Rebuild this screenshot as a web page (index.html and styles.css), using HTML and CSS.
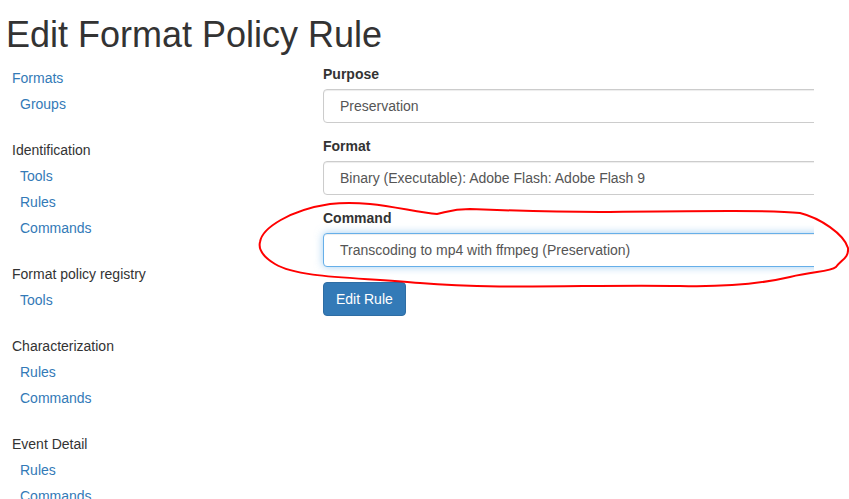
FILE: index.html
```html
<!DOCTYPE html>
<html lang="en">
<head>
<meta charset="utf-8">
<title>Edit Format Policy Rule</title>
<link rel="stylesheet" href="styles.css">
</head>
<body>
<h1 class="page-title">Edit Format Policy Rule</h1>
<div class="layout">
  <nav class="sidebar">
    <ul class="nav-section">
      <li><a class="nav-head" href="#">Formats</a></li>
      <li><a class="nav-sub" href="#">Groups</a></li>
    </ul>
    <ul class="nav-section">
      <li class="nav-head">Identification</li>
      <li><a class="nav-sub" href="#">Tools</a></li>
      <li><a class="nav-sub" href="#">Rules</a></li>
      <li><a class="nav-sub" href="#">Commands</a></li>
    </ul>
    <ul class="nav-section">
      <li class="nav-head">Format policy registry</li>
      <li><a class="nav-sub" href="#">Tools</a></li>
    </ul>
    <ul class="nav-section">
      <li class="nav-head">Characterization</li>
      <li><a class="nav-sub" href="#">Rules</a></li>
      <li><a class="nav-sub" href="#">Commands</a></li>
    </ul>
    <ul class="nav-section">
      <li class="nav-head">Event Detail</li>
      <li><a class="nav-sub" href="#">Rules</a></li>
      <li><a class="nav-sub" href="#">Commands</a></li>
    </ul>
  </nav>
  <main class="main">
    <form class="rule-form">
      <div class="form-group">
        <label class="control-label">Purpose</label>
        <div class="form-control">Preservation</div>
      </div>
      <div class="form-group">
        <label class="control-label">Format</label>
        <div class="form-control">Binary (Executable): Adobe Flash: Adobe Flash 9</div>
      </div>
      <div class="form-group">
        <label class="control-label">Command</label>
        <div class="form-control focused">Transcoding to mp4 with ffmpeg (Preservation)</div>
      </div>
      <button type="button" class="btn-primary">Edit Rule</button>
    </form>
  </main>
</div>
<svg class="scribble" width="849" height="499" viewBox="0 0 849 499">
  <path d="M 260 242 C 262 228, 290 210, 330 204 C 370 199, 410 212, 437 214 C 447 212, 452 209, 470 209 C 520 211, 560 212, 600 212 C 700 211, 770 210, 800 213 C 820 218, 844 234, 848 248 C 849 258, 841 260, 836 267 C 830 272, 815 271, 790 277 C 760 284, 720 287, 680 286 C 600 284, 500 290, 420 283 C 360 277, 300 279, 275 264 C 265 258, 258 250, 260 242 Z" fill="none" stroke="#ff0000" stroke-width="2"/>
</svg>
</body>
</html>
```
FILE: styles.css
```css
* { box-sizing: border-box; }

body {
  margin: 0;
  font-family: "Liberation Sans", Arial, Helvetica, sans-serif;
  font-size: 14px;
  line-height: 20px;
  color: #333;
  background: #fff;
  position: relative;
  width: 849px;
  height: 499px;
  overflow: hidden;
}

a { color: #337ab7; text-decoration: none; }

.page-title {
  margin: 15px 0 10px;
  padding-left: 6px;
  font-size: 36px;
  font-weight: 500;
  line-height: 39.6px;
  color: #333;
}

.layout {
  display: flex;
}

.sidebar {
  width: 310px;
  padding-left: 12px;
}

.nav-section {
  list-style: none;
  margin: 0 0 20px;
  padding: 0;
}

.nav-section li {
  line-height: 26px;
}

.nav-head { display: block; }
.nav-sub { display: block; padding-left: 8px; }

.main {
  width: 504px;
  margin-top: -1px;
  padding-left: 13px;
  overflow: hidden;
}

.form-group {
  margin-bottom: 13px;
}

.control-label {
  display: block;
  margin-bottom: 5px;
  font-weight: bold;
  line-height: 20px;
}

.form-control {
  width: 520px;
  height: 34px;
  padding: 6px 16px;
  border: 1px solid #ccc;
  border-radius: 4px;
  color: #555;
  background: #fff;
  line-height: 20px;
  box-shadow: inset 0 1px 1px rgba(0,0,0,.075);
}

.form-control.focused {
  border-color: #66afe9;
  box-shadow: inset 0 1px 1px rgba(0,0,0,.075), 0 0 8px rgba(102,175,233,.6);
}

.btn-primary {
  margin-top: 2px;
  height: 34px;
  padding: 6px 12px;
  font-family: inherit;
  font-size: 14px;
  line-height: 20px;
  color: #fff;
  background: #337ab7;
  border: 1px solid #2e6da4;
  border-radius: 4px;
}

.scribble {
  position: absolute;
  left: 0;
  top: 0;
  pointer-events: none;
}
```
